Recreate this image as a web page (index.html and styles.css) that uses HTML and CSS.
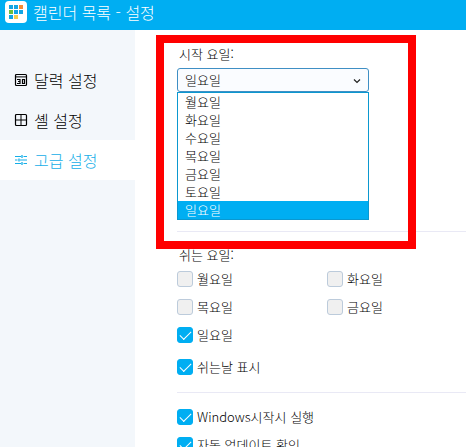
FILE: index.html
```
<!DOCTYPE html>
<html lang="ko">
<head>
<meta charset="utf-8">
<meta name="viewport" content="width=device-width">
<title>캘린더 목록 - 설정</title>
<link rel="stylesheet" href="styles.css">
</head>
<body>
<header class="titlebar">
  <svg class="logo" width="22" height="22" viewBox="0 0 22 22" aria-hidden="true">
    <rect width="22" height="22" rx="4" fill="#fff"/>
    <path fill="#13a5e4" d="M4 4h4v4H4zM9 4h4v4H9zM9 9h4v4H9zM14 9h4v4h-4zM4 14h4v4H4z"/>
    <path fill="#f58b35" d="M14 4h4v4h-4z"/>
    <path fill="#6bbf3c" d="M4 9h4v4H4z"/>
    <path fill="#f8cd4d" d="M9 14h4v4H9z"/>
  </svg>
  <h1 class="title">캘린더 목록 - 설정</h1>
</header>
<div class="layout">
  <nav class="sidebar">
    <a class="nav-item" href="#calendar">
      <svg class="nav-icon" width="14" height="14" viewBox="0 0 14 14" fill="none" stroke="currentColor" aria-hidden="true">
        <rect x="1.500" y="1.500" width="11" height="11" rx="1" stroke-width="1.200"/>
        <path d="M1 3.900h12"/>
        <path d="M3 6.500h3v4H3M4 8.500h2M8.500 6.500h2v4h-2z" stroke-width="1.200"/>
      </svg>
      <span>달력 설정</span>
    </a>
    <a class="nav-item" href="#cell">
      <svg class="nav-icon" width="14" height="14" viewBox="0 0 14 14" fill="none" stroke="currentColor" aria-hidden="true">
        <rect x="1.500" y="1.500" width="11" height="11" rx="1" stroke-width="1.200"/>
        <path d="M7 1.500v11M1.500 7h11"/>
      </svg>
      <span>셸 설정</span>
    </a>
    <a class="nav-item nav-item-active" href="#advanced" aria-current="page">
      <svg class="nav-icon" width="14" height="14" viewBox="0 0 14 14" fill="none" stroke="currentColor" aria-hidden="true">
        <path d="M1 3.500h6M9.500 3.500H13M1 7h2.500M6 7h7M1 10.500h6M9.500 10.500H13"/>
        <path d="M8 2v3M5 5.500v3M8 9v3" stroke-width="1.300"/>
      </svg>
      <span>고급 설정</span>
    </a>
  </nav>
  <main class="content">
    <section class="section">
      <label class="label" for="start-day">시작 요일:</label>
      <div class="dropdown">
        <select class="select" id="start-day">
          <option>월요일</option>
          <option>화요일</option>
          <option>수요일</option>
          <option>목요일</option>
          <option>금요일</option>
          <option>토요일</option>
          <option selected>일요일</option>
        </select>
        <svg class="chevron" width="8" height="6" viewBox="0 0 8 6" fill="none" stroke="#222" stroke-width="1.200" aria-hidden="true"><path d="M1 1.500l3 3 3-3"/></svg>
      </div>
      <ul class="options" role="listbox" aria-label="시작 요일">
        <li class="option" role="option">월요일</li>
        <li class="option" role="option">화요일</li>
        <li class="option" role="option">수요일</li>
        <li class="option" role="option">목요일</li>
        <li class="option" role="option">금요일</li>
        <li class="option" role="option">토요일</li>
        <li class="option option-selected" role="option" aria-selected="true">일요일</li>
      </ul>
      <div class="highlight"></div>
    </section>
    <section class="section">
      <div class="label" id="rest-days">쉬는 요일:</div>
      <div class="days" role="group" aria-labelledby="rest-days">
        <label class="check"><input type="checkbox" class="box">월요일</label>
        <label class="check"><input type="checkbox" class="box">화요일</label>
        <label class="check"><input type="checkbox" class="box">목요일</label>
        <label class="check"><input type="checkbox" class="box">금요일</label>
        <label class="check"><input type="checkbox" class="box" checked>일요일</label>
      </div>
      <label class="check show-rest"><input type="checkbox" class="box" checked>쉬는날 표시</label>
    </section>
    <section class="section section-system">
      <label class="check"><input type="checkbox" class="box" checked>Windows시작시 실행</label>
      <label class="check"><input type="checkbox" class="box" checked>자동 업데이트 확인</label>
    </section>
  </main>
</div>
</body>
</html>
```
FILE: styles.css
```
* {
  box-sizing: border-box;
}

body {
  margin: 0;
  height: 100vh;
  display: flex;
  flex-direction: column;
  overflow: hidden;
  background: #fff;
  color: #000;
  font: 300 13px/20px "Noto Sans CJK KR", sans-serif;
}

.titlebar {
  flex: none;
  display: flex;
  align-items: center;
  gap: 6px;
  height: 30px;
  padding: 0 5px 6px;
  background: #00aef2;
  color: #fff;
}

.title {
  margin: 0;
  font-size: 16px;
  line-height: 20px;
  font-weight: 300;
}

.layout {
  flex: 1;
  display: flex;
  min-height: 0;
}

.sidebar {
  flex: none;
  width: 135px;
  padding-top: 30px;
  background: #f3f7fb;
}

.nav-item {
  display: flex;
  align-items: center;
  gap: 6px;
  height: 40px;
  padding-left: 14px;
  color: #000;
  font-size: 16px;
  text-decoration: none;
}

.nav-item-active {
  background: #fff;
  color: #14aee8;
}

.content {
  flex: 1;
  padding-left: 42px;
  overflow: hidden auto;
  scrollbar-width: none;
}

.section {
  position: relative;
  padding: 14px 0 11px;
}

.section + .section {
  padding-top: 13px;
  border-top: 1px solid #e9e9f5;
}

.section + .section-system {
  padding-top: 10px;
}

.label {
  display: block;
  padding-left: 2px;
}

.dropdown {
  position: relative;
  max-width: 192px;
  margin-top: 4px;
}

.select {
  display: block;
  width: 100%;
  height: 24px;
  padding: 0 7px;
  appearance: none;
  border: 1px solid #3f8fc4;
  border-radius: 3px;
  background: #fafcff;
  color: inherit;
  font: inherit;
}

.chevron {
  position: absolute;
  right: 8px;
  top: 10px;
  pointer-events: none;
}

.options {
  max-width: 192px;
  margin: 0;
  padding: 0;
  border: 1px solid #0b98d0;
  background: #fff;
  list-style: none;
}

.option {
  padding-left: 7px;
  line-height: 18px;
}

.option-selected {
  background: #00aef2;
  color: #fff;
}

.highlight {
  position: absolute;
  top: 5px;
  left: -21px;
  width: 260px;
  height: 214px;
  border: 8px solid #f00;
  z-index: 1;
  pointer-events: none;
}

.days {
  display: grid;
  grid-template-columns: 150px 1fr;
}

.check {
  display: flex;
  align-items: center;
  gap: 4px;
  height: 28px;
}

.show-rest {
  margin-top: 4px;
}

.box {
  appearance: none;
  flex: none;
  width: 16px;
  height: 16px;
  margin: 0;
  border: 1px solid #bccbdb;
  border-radius: 3px;
  background: #f0f0f0;
}

.box:checked {
  border-color: #00aef2;
  background: #00aef2;
}

.box:checked::after {
  content: "";
  display: block;
  width: 10px;
  height: 5px;
  margin: 3px 2px;
  border: solid #fff;
  border-width: 0 0 1px 1px;
  transform: rotate(-45deg);
}
```
